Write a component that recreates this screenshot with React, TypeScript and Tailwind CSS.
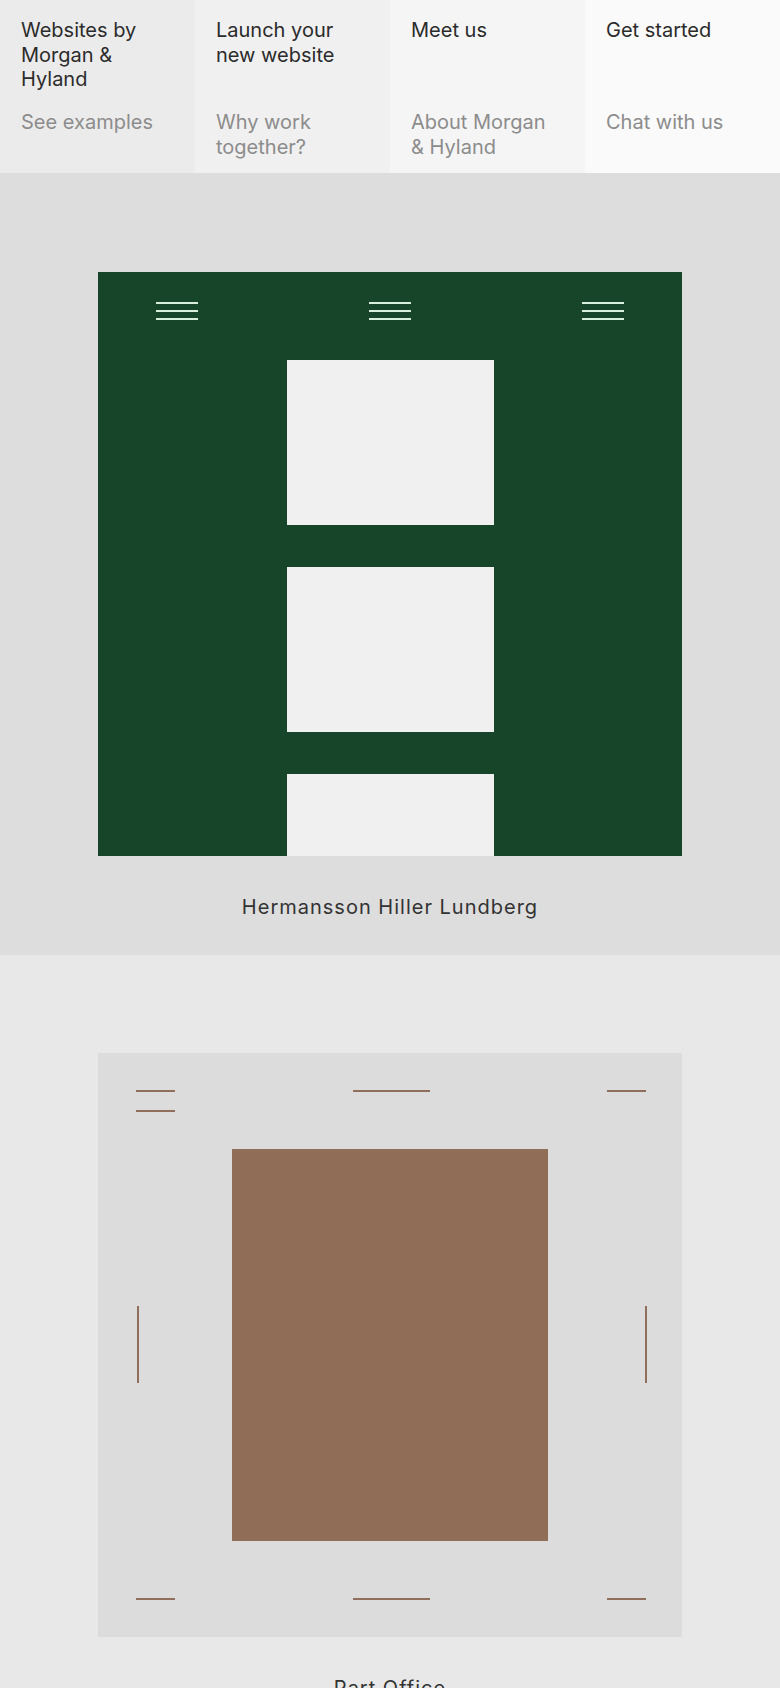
import React from 'react';

const navItems = [
  { title: 'Websites by Morgan & Hyland', sub: 'See examples', bg: 'bg-[#ebebeb]' },
  { title: 'Launch your new website', sub: 'Why work together?', bg: 'bg-[#f0f0f0]' },
  { title: 'Meet us', sub: 'About Morgan & Hyland', bg: 'bg-[#f5f5f5]' },
  { title: 'Get started', sub: 'Chat with us', bg: 'bg-[#fafafa]' },
];

const Burger = () => (
  <div className="flex w-[42px] flex-col gap-[6px]">
    <span className="h-[2px] w-full bg-[#d6eedb]" />
    <span className="h-[2px] w-full bg-[#d6eedb]" />
    <span className="h-[2px] w-full bg-[#d6eedb]" />
  </div>
);

const Line = ({ w }: { w: string }) => <span className={`block h-[2px] bg-[#8f6f5c] ${w}`} />;

export default function App() {
  return (
    <div className="min-h-screen bg-[#e8e8e8] font-['Inter',sans-serif] antialiased">
      {/* top nav */}
      <header className="grid h-[173px] grid-cols-4">
        {navItems.map((item) => (
          <a key={item.title} className={`${item.bg} pl-[21px] pr-6 pt-[18px]`}>
            <div className="h-[92px] text-[20px] leading-[24.5px] text-[#2b2b2b]">{item.title}</div>
            <div className="text-[20px] leading-[24.5px] text-[#8c8c8c]">{item.sub}</div>
          </a>
        ))}
      </header>

      {/* project 1 */}
      <section className="bg-[#dddddd] px-[98px] pt-[99px] pb-[35px]">
        <div className="flex aspect-square w-full flex-col overflow-hidden bg-[#16452a] pt-[30px]">
          <div className="flex justify-between px-[58px]">
            <Burger />
            <Burger />
            <Burger />
          </div>
          <div className="mt-[40px] flex flex-col items-center gap-[42px]">
            <div className="h-[165px] w-[207px] shrink-0 bg-[#f0f0f0]" />
            <div className="h-[165px] w-[207px] shrink-0 bg-[#f0f0f0]" />
            <div className="h-[165px] w-[207px] shrink-0 bg-[#f0f0f0]" />
          </div>
        </div>
        <p className="mt-[39px] text-center text-[20px] leading-[24.5px] tracking-[0.05em] text-[#333333]">
          Hermansson Hiller Lundberg
        </p>
      </section>

      {/* project 2 */}
      <section className="bg-[#e8e8e8] px-[98px] pt-[98px] pb-[35px]">
        <div className="grid aspect-square w-full bg-[#dcdcdc]">
          <div className="col-start-1 row-start-1 flex flex-col justify-between pl-[38px] pr-[36px] py-[37px]">
            <div className="flex items-start justify-between">
              <div className="flex flex-col gap-[18px]">
                <Line w="w-[39px]" />
                <Line w="w-[39px]" />
              </div>
              <Line w="w-[77px]" />
              <Line w="w-[39px]" />
            </div>
            <div className="flex items-end justify-between">
              <Line w="w-[39px]" />
              <Line w="w-[77px]" />
              <Line w="w-[39px]" />
            </div>
          </div>
          <div className="col-start-1 row-start-1 flex items-center justify-between pl-[39px] pr-[35px]">
            <span className="block h-[77px] w-[2px] bg-[#8f6f5c]" />
            <span className="block h-[77px] w-[2px] bg-[#8f6f5c]" />
          </div>
          <div className="col-start-1 row-start-1 h-[392px] w-[316px] place-self-center bg-[#8f6d56]" />
        </div>
        <p className="mt-[39px] text-center text-[20px] leading-[24.5px] tracking-[0.05em] text-[#333333]">
          Part Office
        </p>
      </section>
    </div>
  );
}
